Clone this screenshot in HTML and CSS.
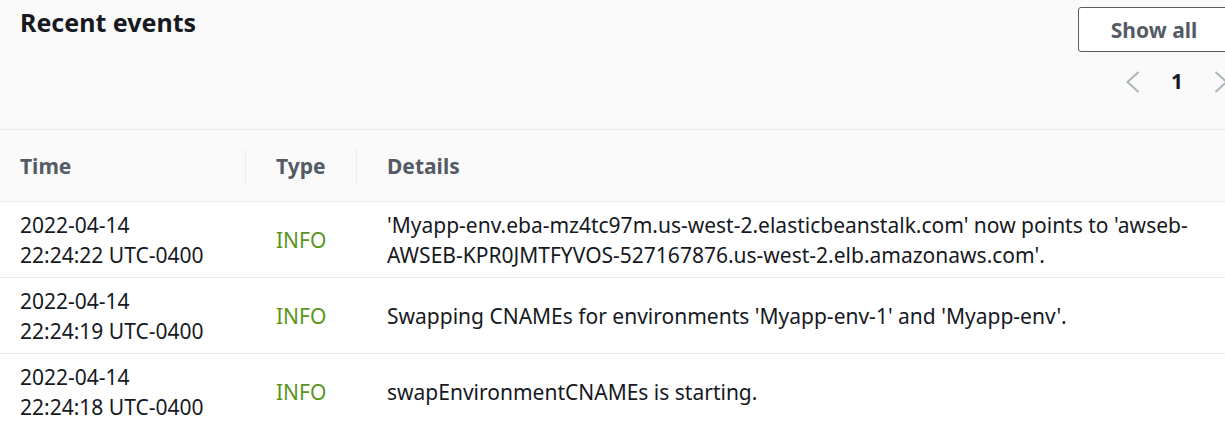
FILE: index.html
```html
<!DOCTYPE html>
<html lang="en">
<head>
<meta charset="utf-8">
<title>Recent events</title>
<link rel="stylesheet" href="styles.css">
</head>
<body>
<div class="panel">
  <div class="panel-header">
    <h2 class="title">Recent events</h2>
    <div class="actions">
      <button class="btn">Show all</button>
      <div class="pager">
        <span class="pager-item">
          <svg class="chev" width="14" height="22" viewBox="0 0 14 22"><polyline points="12.5,1 1.5,11 12.5,21" fill="none" stroke="#aab7b8" stroke-width="2"/></svg>
        </span>
        <span class="pager-item current">1</span>
        <span class="pager-item">
          <svg class="chev" width="14" height="22" viewBox="0 0 14 22"><polyline points="1.5,1 12.5,11 1.5,21" fill="none" stroke="#aab7b8" stroke-width="2"/></svg>
        </span>
      </div>
    </div>
  </div>
  <table class="events">
    <colgroup>
      <col class="c-time">
      <col class="c-type">
      <col class="c-details">
    </colgroup>
    <thead>
      <tr>
        <th class="divided">Time</th>
        <th class="divided">Type</th>
        <th>Details</th>
      </tr>
    </thead>
    <tbody>
      <tr>
        <td>2022-04-14<br>22:24:22 UTC-0400</td>
        <td class="info">INFO</td>
        <td>'Myapp-env.eba-mz4tc97m.us-west-2.elasticbeanstalk.com' now points to 'awseb-<br>AWSEB-KPR0JMTFYVOS-527167876.us-west-2.elb.amazonaws.com'.</td>
      </tr>
      <tr>
        <td>2022-04-14<br>22:24:19 UTC-0400</td>
        <td class="info">INFO</td>
        <td>Swapping CNAMEs for environments 'Myapp-env-1' and 'Myapp-env'.</td>
      </tr>
      <tr>
        <td>2022-04-14<br>22:24:18 UTC-0400</td>
        <td class="info">INFO</td>
        <td>swapEnvironmentCNAMEs is starting.</td>
      </tr>
    </tbody>
  </table>
</div>
</body>
</html>
```

FILE: styles.css
```css
html, body {
  margin: 0;
  padding: 0;
  overflow: hidden;
  background: #ffffff;
}

body {
  font-family: "Noto Sans", "Open Sans", Arial, sans-serif;
  font-size: 21px;
  line-height: 30px;
  color: #16191f;
}

.panel {
  width: 1250px;
}

.panel-header {
  display: flex;
  justify-content: space-between;
  align-items: flex-start;
  padding: 6px 20px 0 20px;
  height: 123px;
  background: #fafafa;
  border-bottom: 1px solid #eaeded;
}

.title {
  margin: 0;
  font-size: 25px;
  line-height: 33px;
  font-weight: 700;
  color: #16191f;
}

.actions {
  display: flex;
  flex-direction: column;
  align-items: flex-end;
}

.btn {
  margin-top: 1px;
  width: 152px;
  height: 45px;
  box-sizing: border-box;
  background: #ffffff;
  border: 1px solid #545b64;
  border-radius: 3px;
  font-family: inherit;
  font-size: 21px;
  font-weight: 700;
  line-height: 30px;
  color: #545b64;
  padding: 0;
}

.pager {
  display: flex;
  margin-top: 14px;
  margin-right: -13px;
}

.pager-item {
  width: 44px;
  height: 30px;
  display: flex;
  align-items: center;
  justify-content: center;
}

.pager-item.current {
  font-weight: 700;
  color: #16191f;
}

.chev {
  display: block;
  margin-top: 2px;
}

.events {
  width: 100%;
  border-collapse: collapse;
  table-layout: fixed;
}

.c-time { width: 256px; }
.c-type { width: 111px; }

.events th {
  position: relative;
  text-align: left;
  font-weight: 700;
  color: #545b64;
  background: #fafafa;
  padding: 21px 20px 20px 20px;
  border-bottom: 1px solid #eaeded;
}

.events th.divided::after {
  content: "";
  position: absolute;
  right: 10px;
  top: 19px;
  height: 34px;
  width: 1px;
  background: #eaeded;
}

.events td {
  padding: 8px 20px 7px 20px;
  vertical-align: middle;
  border-bottom: 1px solid #eaeded;
  white-space: nowrap;
}

.events td.info {
  color: #5b961c;
}
```
